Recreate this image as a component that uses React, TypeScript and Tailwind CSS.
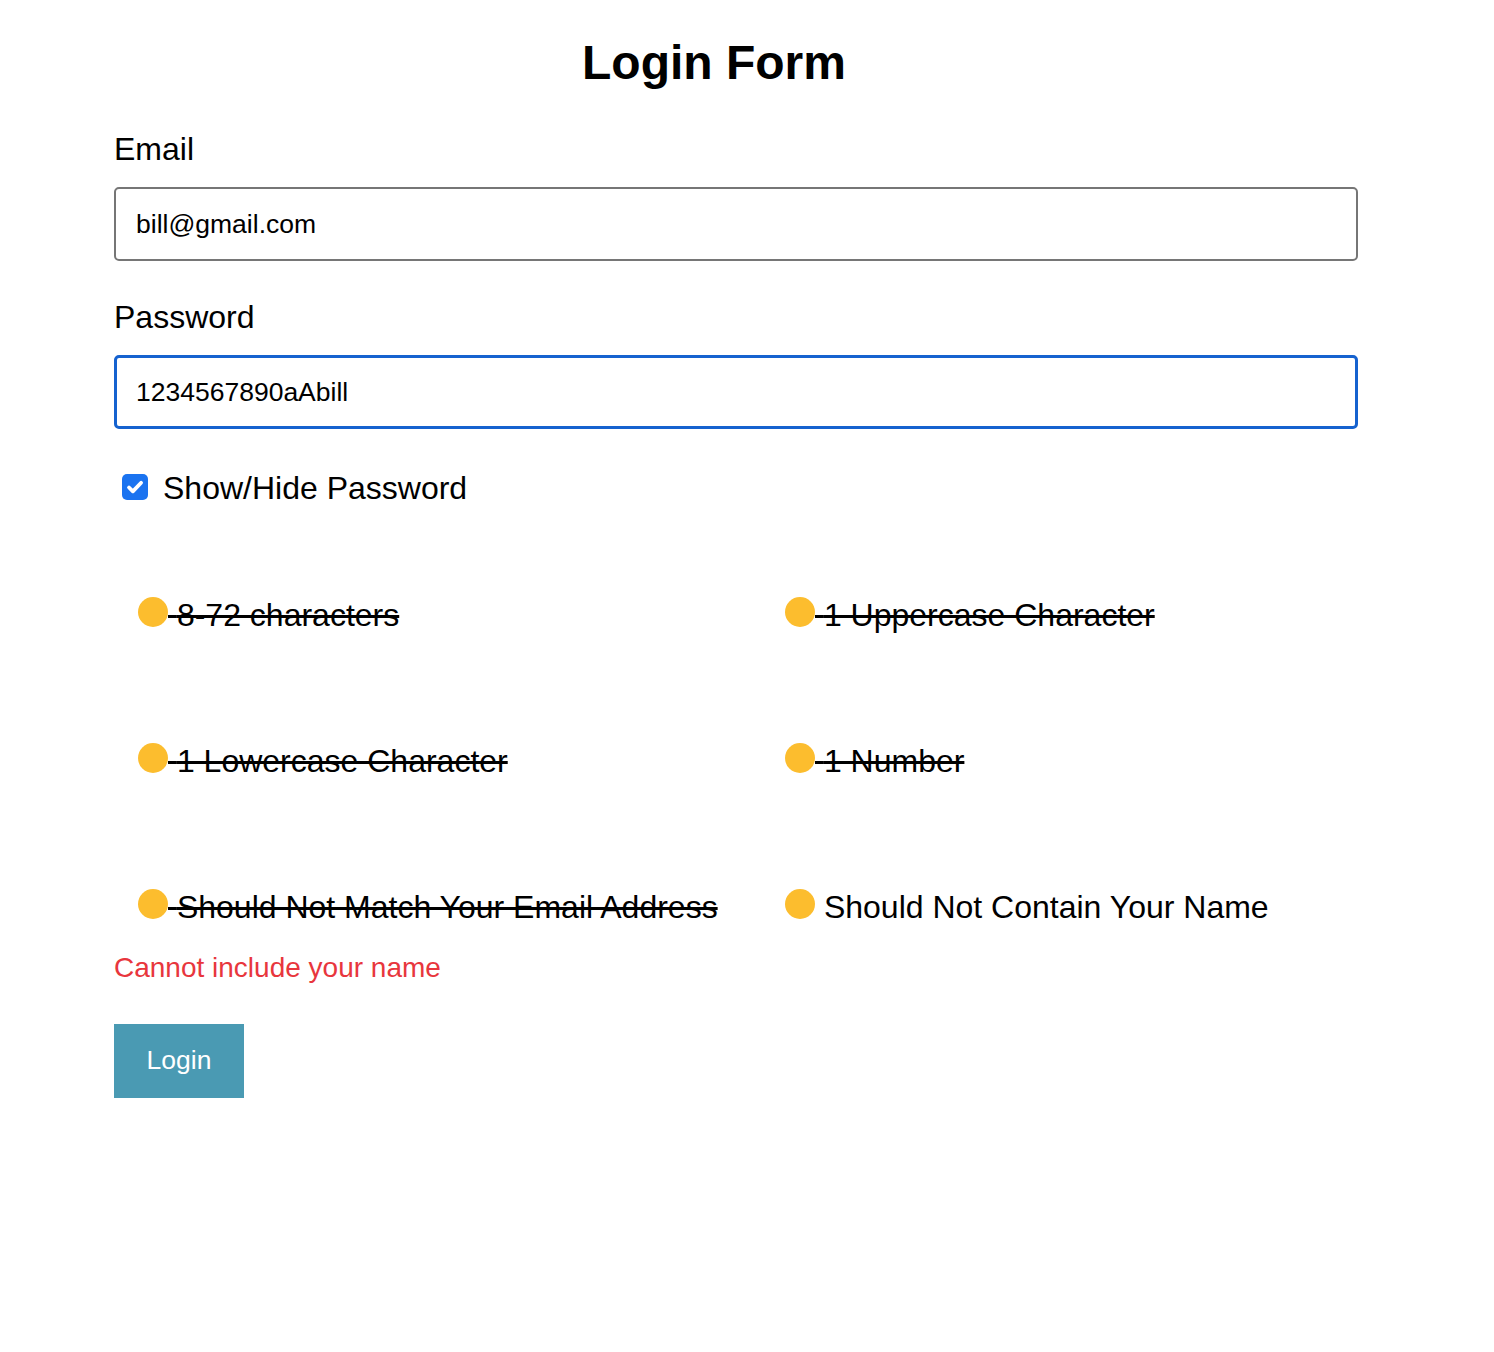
import { useState } from 'react';

const rules = [
  { label: '8-72 characters', met: true },
  { label: '1 Uppercase Character', met: true },
  { label: '1 Lowercase Character', met: true },
  { label: '1 Number', met: true },
  { label: 'Should Not Match Your Email Address', met: true },
  { label: 'Should Not Contain Your Name', met: false },
];

export default function App() {
  const [email, setEmail] = useState('bill@gmail.com');
  const [password, setPassword] = useState('1234567890aAbill');
  const [show, setShow] = useState(true);

  return (
    <div className="min-h-[1352px] w-full bg-white font-['Liberation_Sans',Arial,sans-serif] text-black">
      <div className="ml-[114px] flex w-[1244px] flex-col">
        {/* Title */}
        <h1 className="mt-[39px] h-[48px] pr-[44px] text-center text-[48px] font-bold leading-[48px]">
          Login Form
        </h1>

        {/* Email */}
        <label className="mt-[48px] text-[32px] leading-[28px]">Email</label>
        <input
          value={email}
          onChange={(e) => setEmail(e.target.value)}
          className="mt-[24px] h-[74px] w-full rounded-[5px] border-2 border-[#767676] px-[20px] text-[26.5px] outline-none"
        />

        {/* Password */}
        <label className="mt-[42px] text-[32px] leading-[28px]">Password</label>
        <input
          type={show ? 'text' : 'password'}
          value={password}
          onChange={(e) => setPassword(e.target.value)}
          className="mt-[24px] h-[74px] w-full rounded-[5px] border-[3px] border-[#1562cf] px-[19px] text-[26.5px] outline-none"
        />

        {/* Show / hide */}
        <label className="mt-[43px] flex h-[32px] cursor-pointer items-center gap-[15px] pl-[8px] text-[32px] leading-[36px]">
          <input
            type="checkbox"
            checked={show}
            onChange={() => setShow(!show)}
            className="hidden"
          />
          <span className="mt-[-2px] flex h-[26px] w-[26px] items-center justify-center rounded-[5px] bg-[#1a73f0]">
            {show && (
              <svg viewBox="0 0 16 16" className="h-[20px] w-[20px]" fill="none">
                <path d="M3.2 8.4l3.1 3.1L12.9 4.6" stroke="white" strokeWidth="3" strokeLinecap="round" strokeLinejoin="round" />
              </svg>
            )}
          </span>
          <span>Show/Hide Password</span>
        </label>

        {/* Rules */}
        <ul className="ml-[24px] mt-[93px] grid grid-cols-[647px_1fr] gap-y-[114px]">
          {rules.map((r) => (
            <li key={r.label} className="flex h-[32px] items-start text-[32px] leading-[36px]">
              <span className="h-[30px] w-[30px] shrink-0 rounded-full bg-[#fcbd2e]" />
              <span className={r.met ? 'whitespace-nowrap line-through' : 'whitespace-nowrap'}>
                {'\u00a0'}
                {r.label}
              </span>
            </li>
          ))}
        </ul>

        {/* Error */}
        <p className="mt-[33px] text-[28px] leading-[28px] text-[#e8363d]">Cannot include your name</p>

        {/* Submit */}
        <button className="mt-[42px] flex h-[74px] w-[130px] items-center justify-center bg-[#4a9ab3] text-[26.5px] text-white">
          Login
        </button>
      </div>
    </div>
  );
}
